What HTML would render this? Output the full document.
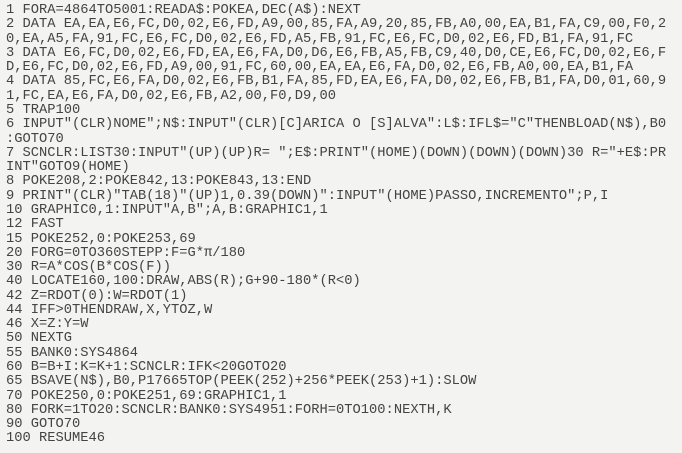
<!DOCTYPE html>
<html><head><meta charset="utf-8"><style>
html,body{margin:0;padding:0;background:#f3f3f1;}
body{width:682px;height:453px;overflow:hidden;}
pre{margin:0;padding:4px 0 0 6px;font-family:"Liberation Mono",monospace;font-size:13.75px;line-height:14.28px;color:#444;white-space:pre;}
</style></head><body><pre>1 FORA=4864TO5001:READA$:POKEA,DEC(A$):NEXT
2 DATA EA,EA,E6,FC,D0,02,E6,FD,A9,00,85,FA,A9,20,85,FB,A0,00,EA,B1,FA,C9,00,F0,2
0,EA,A5,FA,91,FC,E6,FC,D0,02,E6,FD,A5,FB,91,FC,E6,FC,D0,02,E6,FD,B1,FA,91,FC
3 DATA E6,FC,D0,02,E6,FD,EA,E6,FA,D0,D6,E6,FB,A5,FB,C9,40,D0,CE,E6,FC,D0,02,E6,F
D,E6,FC,D0,02,E6,FD,A9,00,91,FC,60,00,EA,EA,E6,FA,D0,02,E6,FB,A0,00,EA,B1,FA
4 DATA 85,FC,E6,FA,D0,02,E6,FB,B1,FA,85,FD,EA,E6,FA,D0,02,E6,FB,B1,FA,D0,01,60,9
1,FC,EA,E6,FA,D0,02,E6,FB,A2,00,F0,D9,00
5 TRAP100
6 INPUT"(CLR)NOME";N$:INPUT"(CLR)[C]ARICA O [S]ALVA":L$:IFL$="C"THENBLOAD(N$),B0
:GOTO70
7 SCNCLR:LIST30:INPUT"(UP)(UP)R= ";E$:PRINT"(HOME)(DOWN)(DOWN)(DOWN)30 R="+E$:PR
INT"GOTO9(HOME)
8 POKE208,2:POKE842,13:POKE843,13:END
9 PRINT"(CLR)"TAB(18)"(UP)1,0.39(DOWN)":INPUT"(HOME)PASSO,INCREMENTO";P,I
10 GRAPHIC0,1:INPUT"A,B";A,B:GRAPHIC1,1
12 FAST
15 POKE252,0:POKE253,69
20 FORG=0TO360STEPP:F=G*π/180
30 R=A*COS(B*COS(F))
40 LOCATE160,100:DRAW,ABS(R);G+90-180*(R&lt;0)
42 Z=RDOT(0):W=RDOT(1)
44 IFF&gt;0THENDRAW,X,YTOZ,W
46 X=Z:Y=W
50 NEXTG
55 BANK0:SYS4864
60 B=B+I:K=K+1:SCNCLR:IFK&lt;20GOTO20
65 BSAVE(N$),B0,P17665TOP(PEEK(252)+256*PEEK(253)+1):SLOW
70 POKE250,0:POKE251,69:GRAPHIC1,1
80 FORK=1TO20:SCNCLR:BANK0:SYS4951:FORH=0TO100:NEXTH,K
90 GOTO70
100 RESUME46</pre></body></html>
